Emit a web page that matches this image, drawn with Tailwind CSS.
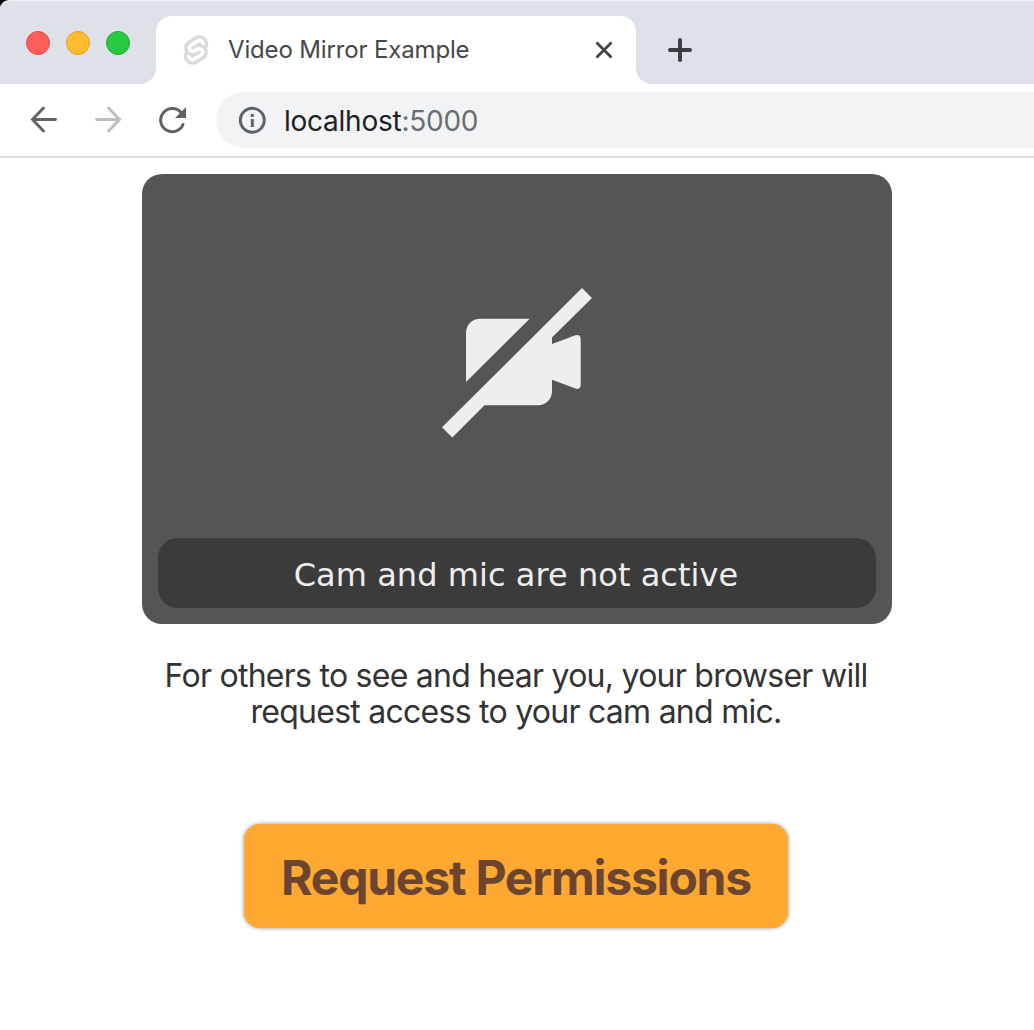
<!DOCTYPE html>
<html lang="en">
<head>
<meta charset="utf-8">
<title>Video Mirror Example</title>
<script src="https://cdn.jsdelivr.net/npm/@tailwindcss/browser@4"></script>
</head>
<body class="bg-white font-['Inter',sans-serif] overflow-hidden">
<div class="w-[1034px] h-[1030px] flex flex-col overflow-hidden">
  <!-- Tab strip -->
  <header class="bg-black shrink-0">
    <div class="h-[84px] bg-[#dee1e7] rounded-tl-[9px] border-t border-[#eef1f5] flex">
      <div class="w-[156px] bg-white flex rounded-tl-[9px]">
        <div class="w-full bg-[#dee1e7] rounded-br-[16px] rounded-tl-[9px] flex items-start gap-4 pl-[26px] pt-[30px]">
          <span class="size-6 rounded-full bg-[#ff5f57] border border-[#e2483f]"></span>
          <span class="size-6 rounded-full bg-[#febc2e] border border-[#e0a029]"></span>
          <span class="size-6 rounded-full bg-[#28c840] border border-[#1dad2f]"></span>
        </div>
      </div>
      <div class="w-[480px] mt-[15px] bg-white rounded-t-[16px] flex items-center">
        <svg class="ml-[27px] w-[26px] h-[30px] shrink-0" viewBox="-3 0 104 118">
          <path fill="#dadada" d="M91.8 15.6C80.9-.1 59.2-4.7 43.6 5.2L16.1 22.8C8.6 27.5 3.4 35.2 1.9 43.9c-1.3 7.3-.2 14.8 3.3 21.3-2.4 3.6-4 7.6-4.7 11.8-1.6 8.9.5 18.1 5.7 25.4 11 15.7 32.6 20.3 48.2 10.4l27.5-17.5c7.5-4.7 12.7-12.4 14.2-21.1 1.3-7.3.2-14.8-3.3-21.3 2.4-3.6 4-7.6 4.7-11.8 1.7-9-.4-18.2-5.7-25.5"/>
          <path fill="#fff" d="M40.900 103.900c-8.900 2.300-18.200-1.200-23.400-8.700-3.200-4.400-4.400-9.900-3.500-15.300.2-.9.4-1.700.6-2.600l.5-1.600 1.400 1c3.300 2.400 6.900 4.200 10.800 5.400l1 .3-.1 1c-.1 1.400.3 2.900 1.100 4.100 1.600 2.300 4.400 3.400 7.100 2.700.6-.2 1.200-.4 1.700-.7L65.500 72c1.400-.9 2.300-2.200 2.600-3.800.3-1.600-.1-3.300-1-4.600-1.600-2.300-4.400-3.300-7.100-2.600-.6.2-1.200.4-1.700.7l-10.500 6.700c-1.700 1.100-3.600 1.900-5.600 2.400-8.900 2.300-18.200-1.200-23.400-8.700-3.100-4.400-4.400-9.900-3.400-15.300.9-5.200 4.100-9.900 8.600-12.700l27.500-17.500c1.700-1.100 3.600-1.900 5.600-2.500 8.900-2.300 18.200 1.200 23.400 8.700 3.200 4.400 4.400 9.900 3.500 15.300-.2.9-.4 1.700-.7 2.600l-.5 1.600-1.400-1c-3.300-2.400-6.900-4.200-10.800-5.400l-1-.3.1-1c.1-1.400-.3-2.900-1.100-4.100-1.600-2.300-4.400-3.300-7.100-2.600-.6.2-1.200.4-1.700.7L32.400 46.100c-1.400.9-2.300 2.200-2.600 3.800s.1 3.300 1 4.600c1.600 2.300 4.400 3.300 7.100 2.600.6-.2 1.200-.4 1.700-.7l10.500-6.700c1.700-1.100 3.600-1.900 5.600-2.500 8.900-2.300 18.200 1.200 23.400 8.700 3.200 4.400 4.400 9.900 3.500 15.300-.9 5.200-4.100 9.900-8.600 12.700l-27.500 17.500c-1.700 1.100-3.600 1.900-5.600 2.500"/>
        </svg>
        <span class="ml-[19px] text-[24px] leading-8 text-[#45484b] whitespace-nowrap tracking-[-0.15px]">Video Mirror Example</span>
        <svg class="ml-auto mr-[22px] size-5 shrink-0" viewBox="0 0 20 20" stroke="#3f4246" stroke-width="2.700" stroke-linecap="round"><path d="M3.300 3.300L16.700 16.700M16.700 3.300L3.300 16.700"/></svg>
      </div>
      <div class="flex-1 bg-white flex">
        <div class="w-full bg-[#dee1e7] rounded-bl-[16px] pl-8 pt-[37px]">
          <svg class="size-6" viewBox="0 0 24 24" stroke="#3c4045" stroke-width="4" stroke-linecap="round"><path d="M2 12H22M12 2V22"/></svg>
        </div>
      </div>
    </div>
  </header>
  <!-- Toolbar -->
  <nav class="h-[74px] shrink-0 border-b-2 border-[#dcdee1] flex items-center">
    <svg class="ml-[30px] w-7 h-7 shrink-0" viewBox="0 0 28 28" fill="none" stroke="#5f6368" stroke-width="2.900" stroke-linecap="round"><path d="M25.500 13.500H2.500M13.500 2L2.500 13.500L13.500 25"/></svg>
    <svg class="ml-9 w-7 h-7 shrink-0" viewBox="0 0 28 28" fill="none" stroke="#bbbdbf" stroke-width="2.900" stroke-linecap="round"><path d="M2.500 13.500H25.500M14.500 2L25.500 13.500L14.500 25"/></svg>
    <svg class="ml-9 w-7 h-7 shrink-0" viewBox="0 0 28 28" fill="none"><path d="M25 18.500A11.600 11.600 0 1 1 23 6.500" stroke="#5f6368" stroke-width="3" stroke-linecap="round"/><path d="M28 1V12H17Z" fill="#5f6368"/></svg>
    <div class="ml-[30px] h-14 flex-1 bg-[#f1f3f4] rounded-l-full flex items-center">
      <svg class="ml-[22px] size-7 shrink-0" viewBox="0 0 28 28"><circle cx="14.300" cy="14.300" r="12" fill="none" stroke="#5f6368" stroke-width="2.900"/><path d="M12.800 13h3v8h-3zM12.800 8h3v3h-3z" fill="#5f6368"/></svg>
      <span class="ml-[18px] pt-px text-[28px] leading-9 whitespace-nowrap text-[#202124] tracking-[-0.25px]">localhost<span class="text-[#6a6d71]">:5000</span></span>
    </div>
  </nav>
  <!-- Page -->
  <main class="flex flex-col items-center w-[1034px] pt-4">
    <section class="w-[750px] h-[450px] rounded-[20px] bg-[#555555] flex flex-col items-center justify-between px-4 pb-4 pt-[106px]">
      <svg class="w-[160px] h-[160px]" viewBox="437 280 160 160" fill="#eee">
        <path d="M480 318.700H529.700L466 382V332.700A14 14 0 0 1 480 318.700Z"/>
        <path d="M582 288L592 298L552 337.500V344L575.500 335.300Q580.700 334 580.700 339.500V384.500Q580.700 390 575.500 388.600L552 379.700V391.300A14 14 0 0 1 538 405.300H484.500L452.300 437.500L442 427.300Z"/>
      </svg>
      <div class="w-full h-[70px] rounded-[20px] bg-[#3b3b3b] flex items-center justify-center pt-[3px] pr-[2px] font-['DejaVu_Sans',sans-serif] text-[32px] text-[#eee] whitespace-nowrap tracking-[0.05px]">Cam and mic are not active</div>
    </section>
    <p class="mt-[34px] mr-[2px] text-[32px] leading-9 text-[#333] text-center whitespace-nowrap tracking-[-0.74px]">For others to see and hear you, your browser will<br>request access to your cam and mic.</p>
    <button class="mt-[94px] mr-[2px] w-[544px] h-[104px] pt-[3px] rounded-[16px] bg-[#ffa832] shadow-[0_0_4px_rgba(60,70,90,0.6)] text-[48px] font-bold text-[#6b452f] whitespace-nowrap tracking-[-1.22px]">Request Permissions</button>
  </main>
</div>
</body>
</html>
